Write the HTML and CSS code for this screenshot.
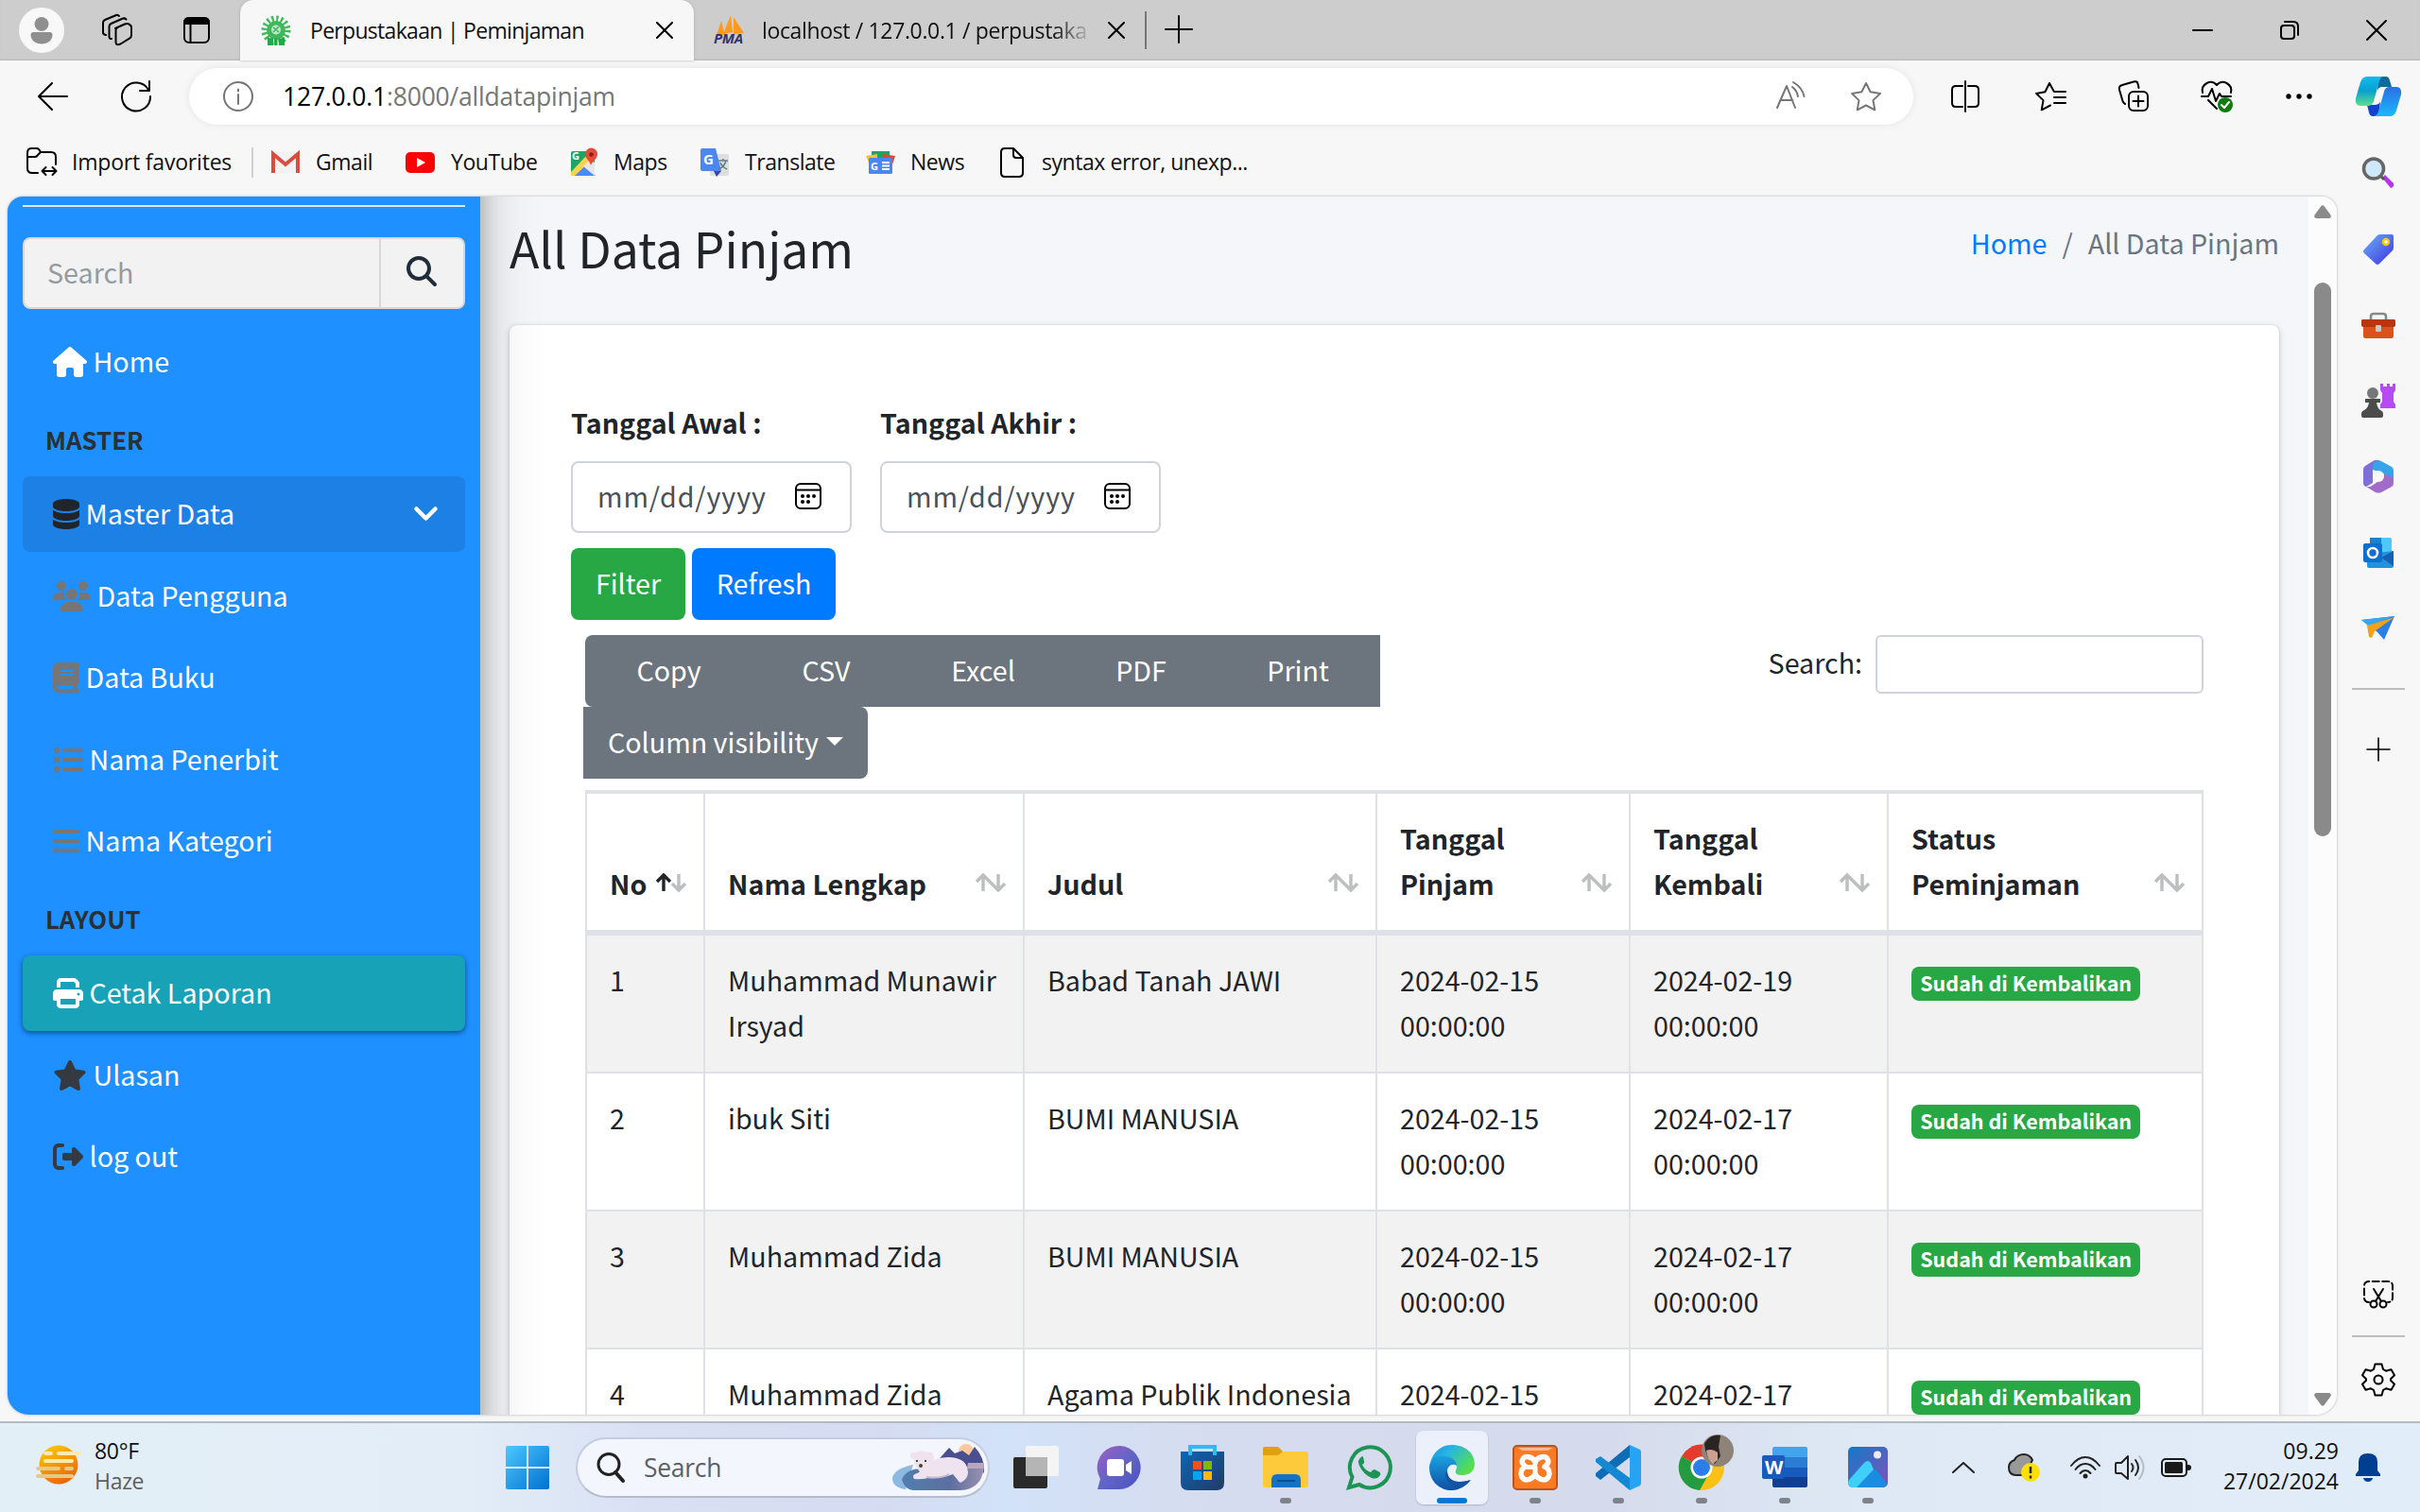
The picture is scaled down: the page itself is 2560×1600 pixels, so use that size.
FILE: index.html
```html
<!DOCTYPE html>
<html lang="id">
<head>
<meta charset="utf-8">
<title>Perpustakaan | Peminjaman</title>
<link rel="stylesheet" href="styles.css">
</head>
<body>
<header class="tabstrip">
  <div class="tab-tools">
    <svg width="48" height="48" viewBox="0 0 48 48"><circle cx="24" cy="24" r="24" fill="#f8f8f8"/><circle cx="24" cy="17.500" r="7.500" fill="#8f8f8f"/><path d="M12.500 29q0-3 3-3h17q3 0 3 3c0 5-4.500 9.500-11.500 9.500S12.500 34 12.500 29z" fill="#8f8f8f"/></svg>
    <svg width="34" height="34" viewBox="0 0 34 34" class="line"><path d="M15 15l10-4.500q3-1.200 5 .5 2 1 2 3v8q0 2.500-2 3.700l-9.500 5.800q-4.500 2-5-1.500V17q0-1.500 1.500-2.500M11 26q-2 .5-2.500-2V13q0-2 2-3L23 4.500q2-.5 3.500 1M5 22q-3-.5-3-2.500V9q0-2 2-3l12-5q2-.5 3 1"/></svg>
    <svg width="30" height="30" viewBox="0 0 30 30"><rect x="2" y="2" width="26" height="26" rx="5" fill="none" stroke="#000" stroke-width="2"/><path d="M1 9V7q0-6 6-6h16q6 0 6 6v2z"/><path d="M8.500 9v18" stroke="#000" stroke-width="2"/></svg>
  </div>
  <div class="tab tab-active">
    <svg width="32" height="34" viewBox="0 0 32 34"><circle cx="16" cy="17" r="12" fill="none" stroke="#3fb95c" stroke-width="7" stroke-dasharray="2.200 2.500"/><circle cx="16" cy="17" r="10" fill="#3fb95c"/><circle cx="16" cy="16.500" r="5" fill="#bfe8c8"/><path d="M13 19l6-6M13 14l6 5" stroke="#3fb95c" stroke-width="1.500"/><path d="M7 33V24l4 2 2-1v8zM14.500 33v-8h3v8zM19 33v-8l2 1 4-2v9z" fill="#23a845"/></svg>
    <span class="tab-title">Perpustakaan | Peminjaman</span>
    <svg width="18" height="18" viewBox="0 0 18 18" class="line"><path d="M1 1l16 16M17 1L1 17"/></svg>
  </div>
  <div class="tab">
    <svg width="34" height="34" viewBox="0 0 34 34"><path d="M8 7l-5 15h9zM18 1l-8 20 10-2zM21 3l11 17-11 1z" fill="#ff9a1f"/><text x="0" y="31" class="pma">PMA</text></svg>
    <span class="tab-title fade">localhost / 127.0.0.1 / perpustaka</span>
    <svg width="18" height="18" viewBox="0 0 18 18" class="line"><path d="M1 1l16 16M17 1L1 17"/></svg>
  </div>
  <span class="tab-sep"></span>
  <svg class="newtab line" width="28" height="28" viewBox="0 0 28 28"><path d="M14 0v28M0 14h28"/></svg>
  <div class="win-controls">
    <svg width="20" height="20" viewBox="0 0 20 20" class="line"><path d="M0 10h20"/></svg>
    <svg width="20" height="20" viewBox="0 0 20 20" class="line"><rect x="1" y="5" width="14" height="14" rx="3"/><path d="M5 1h9q5 0 5 5v9"/></svg>
    <svg width="20" height="20" viewBox="0 0 20 20" class="line"><path d="M0 0l20 20M20 0L0 20"/></svg>
  </div>
</header>

<nav class="toolbar">
  <svg width="32" height="30" viewBox="0 0 32 30" class="line"><path d="M15 1L1 15l14 14M1 15h30"/></svg>
  <svg width="32" height="32" viewBox="0 0 32 32" class="line"><path d="M29 9A15 15 0 1 0 31 16M30 0v10H20"/></svg>
  <div class="address">
    <svg width="32" height="32" viewBox="0 0 32 32" class="line gray"><circle cx="16" cy="16" r="15"/><path d="M16 14v10M16 8.500v2"/></svg>
    <span class="url"><b>127.0.0.1</b>:8000/alldatapinjam</span>
    <svg width="32" height="32" viewBox="0 0 32 32" class="line gray"><path d="M1 28L11 5l9 23M4.500 20h13M17 6q5 4 6 10M18 1q10 6 11.500 15"/></svg>
    <svg width="34" height="32" viewBox="0 0 34 32" class="line gray"><path d="M17 2l4.600 9.300 10.400 1.600-7.500 7.200 1.800 10.200L17 25.500 7.700 30.300l1.800-10.200L2 12.900l10.400-1.600z"/></svg>
  </div>
  <svg width="30" height="32" viewBox="0 0 30 32" class="line"><path d="M12 5H5Q1 5 1 9v14q0 4 4 4h7M18 5h7q4 0 4 4v14q0 4-4 4h-7M15 0v32"/></svg>
  <svg width="34" height="32" viewBox="0 0 34 32" class="line"><path d="M17 25.500L7.700 30.300l1.800-10.200L2 12.900l9.400-1.600L16 2l4.600 8.500M21 11h12M21 17h12M21 23h12"/></svg>
  <svg width="34" height="34" viewBox="0 0 34 34" class="line"><rect x="12" y="12" width="20" height="20" rx="5"/><path d="M22 16.500v11M16.500 22h11M8 25q-2-1-2.500-3L2 10q-1-4 3-5l12-3.500q4-1 4.500 2L22.500 8"/></svg>
  <svg width="34" height="34" viewBox="0 0 34 34" class="line"><path d="M2 13C0 4 11-2 17 5c6-7 17-1 15 8M1 17h7l4-8 4 13 4-8 2 3h10M8 21l9 9"/><circle cx="26" cy="26" r="8" fill="#107c10" stroke="none"/><path d="M22 26l3 3 5-6" stroke="#fff"/></svg>
  <svg width="28" height="6" viewBox="0 0 28 6"><circle cx="3" cy="3" r="2.700"/><circle cx="14" cy="3" r="2.700"/><circle cx="25" cy="3" r="2.700"/></svg>
  <svg width="48" height="42" viewBox="0 0 48 42"><defs><linearGradient id="cpa" x1="0" y1="0" x2="0" y2="1"><stop offset="0" stop-color="#12b9ec"/><stop offset=".5" stop-color="#0aa0cf"/><stop offset="1" stop-color="#5fe08a"/></linearGradient><linearGradient id="cpb" x1="0" y1="0" x2="0" y2="1"><stop offset="0" stop-color="#2a6fe0"/><stop offset="1" stop-color="#1bb9ff"/></linearGradient></defs><path d="M24 0h8q3 0 4 4l2 7H28q-4 0-5 4z" fill="#0d6c99"/><path d="M24 42h-6q-3 0-4-4l-2-8h8q4 0 6-3z" fill="#1440cf"/><path d="M12 0h18q-4 0-5 5l-6 21q-1.500 5-6 5H5q-6 0-5-8L5 6q2-6 7-6z" fill="url(#cpa)"/><path d="M36 42H19q4-1 5-5l6-21q1-5 6-5h7q6 0 5 8l-5 17q-2 6-7 6z" fill="url(#cpb)"/></svg>
</nav>

<div class="browser-body">
  <div class="browser-main">
    <div class="favorites">
      <svg width="32" height="32" viewBox="0 0 32 32" class="line"><path d="M12 27H6q-5 0-5-5V6q0-5 4-5h6q2 0 4 4h11q5 0 5 5v8M1 10h8q2 0 3-2l3-3M17 25h14M20.500 21l-4 4 4 4M27.500 21l4 4-4 4"/></svg>
      <span class="f-import">Import favorites</span>
      <i class="fav-sep"></i>
      <svg width="32" height="24" viewBox="0 0 32 24"><rect x="1" y="1" width="30" height="22" fill="#f2f2f2"/><path d="M3 23V3l13 11L29 3v20" fill="none" stroke="#dd4b3e" stroke-width="4"/></svg>
      <span>Gmail</span>
      <svg width="32" height="22" viewBox="0 0 32 22"><rect width="31" height="22" rx="5" fill="#f00"/><path d="M12 6l9 5-9 5z" fill="#fff"/></svg>
      <span>YouTube</span>
      <svg width="30" height="30" viewBox="0 0 30 30"><rect x="1" y="3" width="25" height="26" rx="2" fill="#1fa463"/><path d="M1 29L14 15l13 14z" fill="#4a8cf7"/><path d="M1 25L20 5l5 5L5 29H1z" fill="#ffd34e"/><path d="M14 19l12 10V15l-5-3z" fill="#e6e6e6"/><path d="M6 29l8-8 8 8z" fill="#4a8cf7"/><text x="2" y="12" class="tiny">G</text><path d="M22 18c-1-5-6-7-6-12a6 6 0 0 1 13 0c0 5-5 7-7 12z" fill="#e5493a"/><circle cx="22.500" cy="6.500" r="2.300" fill="#8b1d15"/></svg>
      <span>Maps</span>
      <svg width="31" height="30" viewBox="0 0 31 30"><rect x="10" y="6" width="20" height="23" rx="2" fill="#dedede"/><path d="M2 0h14l6 24H2q-2 0-2-2V2q0-2 2-2z" fill="#4a87f0"/><path d="M14 24h8l-5 6z" fill="#3446b0"/><text x="3" y="17" class="tr-g">G</text><path d="M19 13h10M24 11v2M27 13q-2 7-8 9M21 15q2 5 7 7" stroke="#607d8b" stroke-width="1.600" fill="none"/></svg>
      <span>Translate</span>
      <svg width="31" height="26" viewBox="0 0 31 26"><path d="M6 1h19v9H6z" fill="#1fa463"/><path d="M0 6l12-2v9H3z" fill="#fbc02d"/><path d="M17 4l14 2-3 9H17z" fill="#ea4335"/><rect x="3" y="8" width="25" height="17" rx="1.500" fill="#4a87f0"/><text x="5" y="21" class="tiny">G</text><path d="M17 13h8M17 16.500h8M17 20h8" stroke="#fff" stroke-width="1.800"/></svg>
      <span>News</span>
      <svg width="28" height="32" viewBox="0 0 28 32" class="line"><path d="M1 5q0-4 4-4h9l10 10v16q0 4-4 4H5q-4 0-4-4zM14 1v7q0 3 3 3h7"/></svg>
      <span class="f-syntax">syntax error, unexp...</span>
    </div>

    <div class="page">
      <aside class="sidebar">
        <div class="brand-line"></div>
        <div class="side-search"><span>Search</span><div><svg width="32" height="32" viewBox="0 0 512 512" fill="#1f2d3d"><path d="M416 208c0 45.900-14.900 88.300-40 122.700L502.600 457.400c12.500 12.500 12.500 32.800 0 45.300s-32.800 12.500-45.300 0L330.700 376c-34.400 25.200-76.800 40-122.700 40C93.100 416 0 322.900 0 208S93.100 0 208 0S416 93.100 416 208zM208 352a144 144 0 1 0 0-288 144 144 0 1 0 0 288z"/></svg></div></div>
        <a class="nav-link first"><svg width="36" height="32" viewBox="0 0 576 512" fill="#fff"><path d="M575.800 255.500c0 18-15 32.100-32 32.100h-32l.7 160.200c0 2.700-.2 5.400-.5 8.100V472c0 22.100-17.900 40-40 40H392c-22.100 0-40-17.900-40-40V384c0-17.700-14.300-32-32-32H256c-17.700 0-32 14.300-32 32v88c0 22.100-17.900 40-40 40H104c-22.100 0-40-17.900-40-40V287.600H32c-18 0-32-14-32-32.100c0-9 3-17 10-24L266.400 8c7-7 15-8 22-8s15 2 21 7L564.800 231.500c8 7 12 15 11 24z"/></svg><span>Home</span></a>
        <h6 class="nav-header">MASTER</h6>
        <a class="nav-link open"><svg width="28" height="32" viewBox="0 0 448 512" fill="#212529"><path d="M448 80v48c0 44.200-100.300 80-224 80S0 172.200 0 128V80C0 35.800 100.300 0 224 0S448 35.800 448 80zM393.200 214.700c20.800-7.400 39.900-16.900 54.800-28.600V288c0 44.200-100.300 80-224 80S0 332.200 0 288V186.100c14.900 11.800 34 21.200 54.800 28.600C99.700 230.700 159.500 240 224 240s124.300-9.300 169.200-25.300zM0 346.100c14.900 11.800 34 21.200 54.800 28.600C99.700 390.700 159.500 400 224 400s124.300-9.300 169.200-25.300c20.800-7.400 39.900-16.900 54.800-28.600V432c0 44.200-100.300 80-224 80S0 476.200 0 432V346.100z"/></svg><span>Master Data</span><svg class="caret" width="25" height="16" viewBox="0 0 25 16"><path d="M2.500 2.500l10 10 10-10" fill="none" stroke="#fff" stroke-width="4.500" stroke-linecap="round" stroke-linejoin="round"/></svg></a>
        <a class="nav-link"><svg width="40" height="32" viewBox="0 0 640 512" fill="#767676"><path d="M144 0a80 80 0 1 1 0 160A80 80 0 1 1 144 0zM512 0a80 80 0 1 1 0 160A80 80 0 1 1 512 0zM0 298.700C0 239.800 47.800 192 106.700 192h42.700c15.900 0 31 3.500 44.600 9.700c-1.300 7.200-1.900 14.700-1.900 22.300c0 38.200 16.800 72.500 43.300 96c-.2 0-.4 0-.7 0H21.300C9.600 320 0 310.400 0 298.700zM405.300 320c-.2 0-.4 0-.7 0c26.600-23.500 43.300-57.800 43.300-96c0-7.600-.7-15-1.900-22.300c13.600-6.300 28.700-9.700 44.600-9.700h42.700C592.200 192 640 239.800 640 298.700c0 11.800-9.600 21.300-21.300 21.300H405.300zM224 224a96 96 0 1 1 192 0 96 96 0 1 1 -192 0zM128 485.300C128 411.700 187.700 352 261.300 352H378.700C452.300 352 512 411.700 512 485.300c0 14.700-11.900 26.700-26.700 26.700H154.700c-14.700 0-26.700-11.900-26.700-26.700z"/></svg><span>Data Pengguna</span></a>
        <a class="nav-link"><svg width="28" height="32" viewBox="0 0 448 512" fill="#767676"><path d="M96 0C43 0 0 43 0 96V416c0 53 43 96 96 96H384h32c17.700 0 32-14.300 32-32s-14.300-32-32-32V384c17.700 0 32-14.300 32-32V32c0-17.700-14.300-32-32-32H384 96zm0 384H352v64H96c-17.700 0-32-14.300-32-32s14.300-32 32-32zm32-240c0-8.800 7.200-16 16-16H336c8.800 0 16 7.200 16 16s-7.200 16-16 16H144c-8.800 0-16-7.200-16-16zm16 48H336c8.800 0 16 7.200 16 16s-7.200 16-16 16H144c-8.800 0-16-7.200-16-16s7.200-16 16-16z"/></svg><span>Data Buku</span></a>
        <a class="nav-link"><svg width="32" height="32" viewBox="0 0 32 32" fill="#767676"><rect x="1" y="3" width="6" height="6" rx="1.500"/><rect x="1" y="13" width="6" height="6" rx="1.500"/><rect x="1" y="23" width="6" height="6" rx="1.500"/><rect x="10" y="4" width="22" height="4" rx="2"/><rect x="10" y="14" width="22" height="4" rx="2"/><rect x="10" y="24" width="22" height="4" rx="2"/></svg><span>Nama Penerbit</span></a>
        <a class="nav-link"><svg width="28" height="32" viewBox="0 0 28 32" fill="#767676"><rect y="4" width="28" height="4" rx="2"/><rect y="14" width="28" height="4" rx="2"/><rect y="24" width="28" height="4" rx="2"/></svg><span>Nama Kategori</span></a>
        <h6 class="nav-header">LAYOUT</h6>
        <a class="nav-link active"><svg width="32" height="32" viewBox="0 0 512 512" fill="#fff"><path fill-rule="evenodd" d="M128 0C92.700 0 64 28.700 64 64v96h64V64H354.700L384 93.300V160h64V93.300c0-17-6.700-33.300-18.700-45.300L400 18.700C388 6.700 371.700 0 354.700 0H128zM384 352v96H128V352H384zm64 32h32c17.700 0 32-14.300 32-32V256c0-35.300-28.700-64-64-64H64c-35.300 0-64 28.700-64 64v96c0 17.700 14.300 32 32 32H64v64c0 35.300 28.700 64 64 64H384c35.300 0 64-28.700 64-64V384zM432 248a24 24 0 1 1 0 48 24 24 0 1 1 0-48z"/></svg><span>Cetak Laporan</span></a>
        <a class="nav-link"><svg width="36" height="32" viewBox="0 0 576 512" fill="#343a40"><path d="M316.900 18C311.600 7 300.400 0 288.100 0s-23.400 7-28.800 18L195 150.300 51.400 171.500c-12 1.800-22 10.200-25.700 21.700s-.7 24.200 7.900 32.700L137.800 329 113.200 474.700c-2 12 3 24.200 12.900 31.300s23 8 33.800 2.300l128.300-68.500 128.300 68.500c10.800 5.700 23.900 4.900 33.800-2.300s14.900-19.300 12.900-31.300L438.500 329 542.700 225.900c8.600-8.500 11.700-21.200 7.900-32.700s-13.700-19.900-25.700-21.700L381.200 150.300 316.900 18z"/></svg><span>Ulasan</span></a>
        <a class="nav-link"><svg width="32" height="32" viewBox="0 0 512 512" fill="#343a40"><path d="M377.900 105.900L500.700 228.700c7.200 7.200 11.300 17.100 11.300 27.300s-4.100 20.100-11.300 27.300L377.900 406.100c-6.400 6.400-15 9.900-24 9.900c-18.700 0-33.900-15.200-33.900-33.900l0-62.100-128 0c-17.700 0-32-14.300-32-32l0-64c0-17.700 14.300-32 32-32l128 0 0-62.100c0-18.700 15.200-33.900 33.900-33.900c9 0 17.600 3.600 24 9.900zM160 96L96 96c-17.700 0-32 14.300-32 32l0 256c0 17.700 14.300 32 32 32l64 0c17.700 0 32 14.300 32 32s-14.300 32-32 32l-64 0c-53 0-96-43-96-96L0 128C0 75 43 32 96 32l64 0c17.700 0 32 14.300 32 32s-14.300 32-32 32z"/></svg><span>log out</span></a>
      </aside>

      <main class="content">
        <div class="content-header">
          <h1>All Data Pinjam</h1>
          <p class="crumbs"><a>Home</a><span>/</span>All Data Pinjam</p>
        </div>
        <section class="card">
          <div class="dates">
            <label>Tanggal Awal :<span class="date"><em>mm/dd/yyyy</em><svg width="30" height="30" viewBox="0 0 30 30" class="line"><rect x="2" y="2" width="26" height="26" rx="5"/><path d="M2 8.500h26"/><g fill="#000" stroke="none"><circle cx="9" cy="15" r="2"/><circle cx="15" cy="15" r="2"/><circle cx="21" cy="15" r="2"/><circle cx="9" cy="21" r="2"/><circle cx="15" cy="21" r="2"/></g></svg></span></label>
            <label>Tanggal Akhir :<span class="date"><em>mm/dd/yyyy</em><svg width="30" height="30" viewBox="0 0 30 30" class="line"><rect x="2" y="2" width="26" height="26" rx="5"/><path d="M2 8.500h26"/><g fill="#000" stroke="none"><circle cx="9" cy="15" r="2"/><circle cx="15" cy="15" r="2"/><circle cx="21" cy="15" r="2"/><circle cx="9" cy="21" r="2"/><circle cx="15" cy="21" r="2"/></g></svg></span></label>
          </div>
          <div class="actions"><button class="btn green">Filter</button><button class="btn blue">Refresh</button></div>
          <div class="table-tools">
            <div class="exports">
              <div class="btn-group"><button class="b1">Copy</button><button class="b2">CSV</button><button class="b3">Excel</button><button class="b4">PDF</button><button class="b5">Print</button></div>
              <button class="colvis">Column visibility<i></i></button>
            </div>
            <label class="filter">Search:<span></span></label>
          </div>
          <table>
            <colgroup><col class="c1"><col class="c2"><col class="c3"><col class="c4"><col class="c5"><col class="c6"></colgroup>
            <thead><tr>
              <th><div>No<svg class="sort" width="34" height="20" viewBox="0 0 34 20"><path d="M25 1v17M18 11l7 7 7-7"/><path class="on" d="M9 19V2M2 9l7-7 7 7"/></svg></div></th>
              <th><div>Nama Lengkap<svg class="sort" width="34" height="20" viewBox="0 0 34 20"><path d="M9 19V2M2 9l7-7 8 8M25 1v17M17 10l8 8 7-7"/></svg></div></th>
              <th><div>Judul<svg class="sort" width="34" height="20" viewBox="0 0 34 20"><path d="M9 19V2M2 9l7-7 8 8M25 1v17M17 10l8 8 7-7"/></svg></div></th>
              <th><div>Tanggal<br>Pinjam<svg class="sort" width="34" height="20" viewBox="0 0 34 20"><path d="M9 19V2M2 9l7-7 8 8M25 1v17M17 10l8 8 7-7"/></svg></div></th>
              <th><div>Tanggal<br>Kembali<svg class="sort" width="34" height="20" viewBox="0 0 34 20"><path d="M9 19V2M2 9l7-7 8 8M25 1v17M17 10l8 8 7-7"/></svg></div></th>
              <th><div>Status<br>Peminjaman<svg class="sort" width="34" height="20" viewBox="0 0 34 20"><path d="M9 19V2M2 9l7-7 8 8M25 1v17M17 10l8 8 7-7"/></svg></div></th>
            </tr></thead>
            <tbody>
              <tr><td>1</td><td>Muhammad Munawir<br>Irsyad</td><td>Babad Tanah JAWI</td><td>2024-02-15<br>00:00:00</td><td>2024-02-19<br>00:00:00</td><td><span class="badge">Sudah di Kembalikan</span></td></tr>
              <tr><td>2</td><td>ibuk Siti</td><td>BUMI MANUSIA</td><td>2024-02-15<br>00:00:00</td><td>2024-02-17<br>00:00:00</td><td><span class="badge">Sudah di Kembalikan</span></td></tr>
              <tr><td>3</td><td>Muhammad Zida</td><td>BUMI MANUSIA</td><td>2024-02-15<br>00:00:00</td><td>2024-02-17<br>00:00:00</td><td><span class="badge">Sudah di Kembalikan</span></td></tr>
              <tr><td>4</td><td>Muhammad Zida</td><td>Agama Publik Indonesia</td><td>2024-02-15</td><td>2024-02-17</td><td><span class="badge">Sudah di Kembalikan</span></td></tr>
            </tbody>
          </table>
        </section>
      </main>

      <div class="scrollbar">
        <svg width="18" height="14" viewBox="0 0 18 14"><path d="M7.500 1q1.500-1.500 3 0l7 9.500q1 3-1.500 3.500H2q-2.500-.5-1.500-3.500z" fill="#8a8a8a"/></svg>
        <div class="thumb"></div>
        <svg width="18" height="14" viewBox="0 0 18 14"><path d="M7.500 13q1.500 1.500 3 0l7-9.500Q18.500.5 16 0H2Q-.5.5.5 3.500z" fill="#8a8a8a"/></svg>
      </div>
    </div>
  </div>

  <aside class="rail">
    <svg width="36" height="34" viewBox="0 0 36 34"><path d="M22 22l3-3 9 9q1 4-3 5z" fill="#b534f0"/><path d="M20 20l4 4" stroke="#555" stroke-width="3"/><circle cx="13" cy="12.500" r="10.500" fill="#cfe9fb" stroke="#666" stroke-width="3.500"/></svg>
    <svg width="36" height="34" viewBox="0 0 36 34"><defs><linearGradient id="tg" x1="0" y1="0" x2="1" y2="1"><stop offset="0" stop-color="#6db4f8"/><stop offset="1" stop-color="#3b2fe0"/></linearGradient></defs><path d="M17 2q1-1 3-1h12q2 0 2 2v12q0 2-1 3L19 32q-2 2-4 0L3 21q-2-2 0-4z" fill="url(#tg)"/><circle cx="26" cy="9" r="3" fill="#fff" stroke="#f9c80e" stroke-width="2.500"/></svg>
    <svg width="36" height="28" viewBox="0 0 36 28"><path d="M10 8V4q0-3 3-3h10q3 0 3 3v4" fill="none" stroke="#888" stroke-width="2.600"/><rect x="2" y="12" width="32" height="15" rx="2.500" fill="#d9531a"/><path d="M1 7h34q1 0 1 2v4q0 2-2 2H2q-2 0-2-2V9q0-2 1-2z" fill="#b8360d"/><rect x="15" y="13" width="6" height="7" rx="1" fill="#c9c9c9"/></svg>
    <svg width="36" height="36" viewBox="0 0 36 36"><path d="M20 0h3v3h4V0h3v3h3V0h3v7l-2 3v9l2 3v4H20v-4l2-3v-9l-2-3z" fill="#b64bf5"/><circle cx="12" cy="10" r="6" fill="#777"/><path d="M4 16h16v4h-4q1 6 4 8 3 1 3 4v2q0 2-2 2H2q-2 0-2-2v-2q0-3 3-4 4-2 5-8H4z" fill="#4c4c4c"/></svg>
    <svg width="34" height="36" viewBox="0 0 34 36"><path d="M12 1.500L3 7Q1 8 1 11v14q0 3 3 4l7-4V11q0-3 3-4l5-5q-4-2-7-.5z" fill="#7d6fd8"/><path d="M14 2q3-1.500 6 0l11 6q2 1 2 4v9l-9-5-13-5V7q0-3 3-5z" fill="#35a4e8"/><path d="M33 20v5q0 3-2 4l-11 6q-3 1-6 0L4 29q3 1 6-1l12-8q1-1 1-5z" fill="#a06bc9"/><circle cx="17" cy="18" r="6" fill="#f7f7f7"/></svg>
    <svg width="34" height="32" viewBox="0 0 34 32"><rect x="8" y="0" width="23" height="18" rx="1.500" fill="#4fc7fa"/><path d="M8 0h12v14H8z" fill="#1a80d0"/><path d="M5 17l28-3v16q0 2-2 2H7q-2 0-2-2z" fill="#2192dd"/><path d="M33 14v16L20 21z" fill="#1561b0"/><rect x="1" y="6" width="20" height="20" rx="2" fill="#0a6fd0"/><circle cx="11" cy="16" r="5" fill="none" stroke="#fff" stroke-width="2.600"/></svg>
    <svg width="36" height="26" viewBox="0 0 36 26"><path d="M0 4L35 0 24 25l-7-8z" fill="#2b7fe4"/><path d="M0 4L35 0 7 10z" fill="#35a8ef"/><path d="M6 10L35 1 14 16l-3 7-3-1z" fill="#f0a21c"/></svg>
    <i></i>
    <svg width="24" height="24" viewBox="0 0 24 24" class="line"><path d="M12 0v24M0 12h24" stroke-width="1.600"/></svg>
    <div class="rail-bottom">
      <svg width="34" height="32" viewBox="0 0 34 32" class="line"><path d="M7 24Q2 24 2 19V7q0-5 5-5h20q5 0 5 5v12q0 5-5 5" stroke-dasharray="7 3.500"/><path d="M12 10l8 13M22 10l-8 13"/><circle cx="12" cy="26" r="3.500"/><circle cx="22" cy="26" r="3.500"/></svg>
      <i></i>
      <svg width="36" height="36" viewBox="0 0 36 36" class="line"><path d="M14.500 1.500h7l1.500 5.500 3 1.700 5.500-1.400 3.500 6-4 4v1.400l4 4-3.500 6-5.500-1.400-3 1.700-1.500 5.500h-7L13 29l-3-1.700-5.500 1.400-3.500-6 4-4v-1.400l-4-4 3.500-6L10 8.700 13 7z" stroke-linejoin="round"/><circle cx="18" cy="18" r="4.500"/></svg>
    </div>
  </aside>
</div>

<footer class="taskbar">
  <div class="weather">
    <svg width="50" height="42" viewBox="0 0 50 42"><defs><linearGradient id="sun" x1="0" y1="0" x2=".5" y2="1"><stop offset="0" stop-color="#ffd000"/><stop offset="1" stop-color="#ea6a0a"/></linearGradient></defs><circle cx="24" cy="21" r="20.500" fill="url(#sun)"/><g stroke-width="4" stroke-linecap="round"><path d="M10 9h6M24 9h22M10 17h28" stroke="#fbe9ad"/><path d="M2 25h22M32 25h6M2 33h36" stroke="#e3c98c"/></g></svg>
    <p>80°F<br><span>Haze</span></p>
  </div>
  <svg class="start" width="46" height="46" viewBox="0 0 46 46"><defs><linearGradient id="wn" x1="0" y1="0" x2="1" y2="1"><stop offset="0" stop-color="#4cc9ff"/><stop offset="1" stop-color="#006fd0"/></linearGradient></defs><path d="M2 0h20v22H0V2q0-2 2-2zM24 0h20q2 0 2 2v20H24zM0 24h22v22H2q-2 0-2-2zM24 24h22v20q0 2-2 2H24z" fill="url(#wn)"/></svg>
  <div class="task-search">
    <svg width="30" height="32" viewBox="0 0 30 32"><circle cx="13" cy="12.500" r="11" fill="none" stroke="#222" stroke-width="3"/><path d="M20 21l8 9" stroke="#222" stroke-width="4" stroke-linecap="round"/></svg>
    <span>Search</span>
    <svg width="100" height="50" viewBox="0 0 100 50"><defs><linearGradient id="ice" x1="0" y1="0" x2="1" y2="0"><stop offset="0" stop-color="#4f7fae"/><stop offset=".6" stop-color="#5c6f9f"/><stop offset="1" stop-color="#9a8fb0"/></linearGradient></defs><circle cx="80" cy="8" r="8" fill="#fcc9a0"/><path d="M46 22L62 4l6 6 8-3 7 5 6-9q11 12 10 27l-8 6H46z" fill="#4a4f8f"/><path d="M82 20l17 0q0 12-5 20H78z" fill="#b8a8b8"/><path d="M2 36Q4 26 24 22l-8 26Q2 46 2 36z" fill="#8db9e0"/><path d="M12 38q4-12 22-12h64q-2 22-24 23H24q-8 0-12-11z" fill="url(#ice)"/><path d="M21 12q1-5 5-3 8-3 14 0 4-2 5 2 2 4 0 6 8-3 16-3 20 0 21 16 0 6-6 10-3 2-5-2l-5-6q-12 5-26 4-8 2-15 1-3-4 3-6 4-1 2-3-6-6-5-12-4 0-4-4z" fill="#efe3f0"/><path d="M62 32q-8 5-24 3" fill="none" stroke="#cbb6d2" stroke-width="2"/><path d="M28 17v2M37 17v2" stroke="#443" stroke-width="2"/><circle cx="32" cy="23" r="2" fill="#443"/></svg>
  </div>
  <div class="apps">
    <div><svg width="48" height="46" viewBox="0 0 48 46"><rect x="0" y="12" width="36" height="33" rx="2" fill="#2a2a2a"/><rect x="13" y="0" width="35" height="32" rx="2" fill="#f4f4f4"/><path d="M13 12h23v20H13z" fill="#b5b5b5"/></svg></div>
    <div><svg width="48" height="48" viewBox="0 0 48 48"><defs><linearGradient id="ch" x1="0" y1="0" x2="1" y2="1"><stop offset="0" stop-color="#a15fc0"/><stop offset=".5" stop-color="#6264c7"/><stop offset="1" stop-color="#4a52bd"/></linearGradient></defs><path d="M1 47l3-11A23 23 0 1 1 24 47z" fill="url(#ch)"/><rect x="11" y="15" width="18" height="18" rx="3" fill="#fff"/><path d="M31 21l6-4v14l-6-4z" fill="#fff"/></svg></div>
    <div><svg width="48" height="48" viewBox="0 0 48 48"><defs><linearGradient id="st" x1="0" y1="0" x2="1" y2="1"><stop offset="0" stop-color="#0d66b5"/><stop offset="1" stop-color="#223a66"/></linearGradient></defs><path d="M11 13V2h26v11" fill="none" stroke="#2fb9f5" stroke-width="4"/><path d="M1 7h46v33q0 8-8 8H9q-8 0-8-8z" fill="url(#st)"/><path d="M11 7v4M37 7v4" stroke="#2fb9f5" stroke-width="4"/><path d="M14 17h9v9h-9z" fill="#f25022"/><path d="M25 17h9v9h-9z" fill="#7fba00"/><path d="M14 28h9v9h-9z" fill="#00a4ef"/><path d="M25 28h9v9h-9z" fill="#ffb900"/></svg></div>
    <div class="run"><svg width="48" height="44" viewBox="0 0 48 44"><path d="M2 0h14l5 5-3 6H0V2q0-2 2-2z" fill="#dea00c"/><path d="M16 9l5-4h25q2 0 2 2v34q0 2-2 2H2q-2 0-2-2V9z" fill="#fdca3c"/><path d="M9 43V35q0-6 6-6h19q6 0 6 6v8z" fill="#1273c4"/><path d="M15 36h19" stroke="#0b4d8c" stroke-width="2"/></svg></div>
    <div><svg width="48" height="48" viewBox="0 0 48 48"><path d="M3 45l3.500-11A21.500 21.500 0 1 1 14 42z" fill="none" stroke="#1d9454" stroke-width="4"/><path d="M17 12q-6 4-3 10 4 9 13 13 6 2 9-3 1-3-2-4l-4-2q-2 0-4 3-6-2-9-8 3-2 2-4l-1-4q0-1-1-1z" fill="#1d9454"/></svg></div>
    <div class="current"><svg width="48" height="48" viewBox="0 0 48 48"><defs><linearGradient id="e1" x1="0" y1="0" x2="1" y2=".6"><stop offset="0" stop-color="#1b8ee0"/><stop offset=".4" stop-color="#26b5e5"/><stop offset="1" stop-color="#57e04a"/></linearGradient><linearGradient id="e2" x1="0" y1="0" x2="0" y2="1"><stop offset="0" stop-color="#1ba0e0"/><stop offset="1" stop-color="#0c50a4"/></linearGradient></defs><path d="M1 19C4 7 13 0 24 0c14 0 24 9 24 20 0 8-6 12-13 12-6 0-8-2-7-5 3-5-1-12-9-13C11 13 4 15 1 19z" fill="url(#e1)"/><path d="M0 24c0-8 7-13 15-12 9 0 14 5 14 10-4-3-10 0-10 6 0 9 9 14 24 9-4 6-11 11-19 11C10 48 0 38 0 24z" fill="url(#e2)"/><path d="M17 30c0 8 6 14 14 16 5-1 9-4 13-9-14 5-25 1-25-9z" fill="#1353a0"/></svg></div>
    <div class="run"><svg width="48" height="48" viewBox="0 0 48 48"><rect x="1" y="1" width="46" height="46" rx="4" fill="#fb7a24" stroke="#b9541a" stroke-width="2"/><path d="M6 3h36l-4 3H10z" fill="#fdb98a"/><path d="M24 18c-3-6-11-7-13-3-2 3 0 6 3 8-5 2-6 7-4 11 3 5 11 3 14-3 3 6 11 8 14 3 2-4 1-9-4-11 3-2 5-5 3-8-2-4-10-3-13 3z" fill="none" stroke="#fff" stroke-width="5.500" stroke-linejoin="round"/><path d="M17 23.500h7M24 24v7M24 16v4" stroke="#fff" stroke-width="5" stroke-linecap="round"/></svg></div>
    <div class="run"><svg width="48" height="48" viewBox="0 0 48 48"><path d="M36 0l11 5q1 1 1 3v32q0 2-1 3l-11 5V0z" fill="#26a3f2"/><path d="M36 0v13L5 37l-5-4v-3z" fill="#0f6db5"/><path d="M36 48V35L5 12l-5 3v3z" fill="#1488d2"/></svg></div>
    <div class="run"><svg width="58" height="60" viewBox="0 0 58 60" class="chrome"><circle cx="24" cy="35" r="24" fill="#fbc116"/><path d="M24 35L3 23A24 24 0 0 1 45 23z" fill="#e33b2e"/><path d="M24 35L3 23a24 24 0 0 0 19 36l10-18z" fill="#249a41"/><circle cx="24" cy="35" r="11.500" fill="#fff"/><circle cx="24" cy="35" r="9" fill="#2b7de9"/><circle cx="41" cy="17" r="17" fill="#8d8378"/><path d="M27 10q6-11 17-9l-2 12 2 10-6 8q-10-6-11-21z" fill="#2a2422"/><path d="M29 17q6-3 12 2v8l-5 4q-6-5-7-14z" fill="#c9a091"/></svg></div>
    <div class="run"><svg width="48" height="44" viewBox="0 0 48 44"><path d="M13 0h33q2 0 2 2v9H11V2q0-2 2-2z" fill="#41a5ee"/><path d="M11 11h37v11H11z" fill="#2b7cd3"/><path d="M11 22h37v10H11z" fill="#185abd"/><path d="M11 32h37v9q0 2-2 2H13q-2 0-2-2z" fill="#103f91"/><rect x="0" y="9" width="24" height="25" rx="2" fill="#185abd"/><text x="3" y="29" class="word">W</text></svg></div>
    <div class="run"><svg width="42" height="44" viewBox="0 0 42 44"><defs><linearGradient id="ph" x1="0" y1="0" x2="1" y2="1"><stop offset="0" stop-color="#1379c8"/><stop offset="1" stop-color="#8052b8"/></linearGradient></defs><rect width="42" height="43" rx="5" fill="url(#ph)"/><path d="M5 43L26 25q3-2 5 1l10 13q-1 4-5 4z" fill="#1a8de0"/><path d="M1 35l16-18q4-4 7 0l3 7L9 43H5q-5 0-5-5z" fill="#3fd0fa"/><circle cx="31" cy="8.500" r="4" fill="#f0eaf6"/></svg></div>
  </div>
  <div class="tray">
    <svg width="24" height="14" viewBox="0 0 24 14" class="line dark"><path d="M1 12L12 2l11 10"/></svg>
    <svg width="34" height="32" viewBox="0 0 34 32"><path d="M9 24q-8 0-8-8 0-6 6-8 3-6 10-6 6 0 9 6l-8 16z" fill="#999" stroke="#222" stroke-width="2"/><circle cx="24" cy="21" r="10" fill="#fce100"/><path d="M24 15v7M24 24.500v3" stroke="#222" stroke-width="2.500"/></svg>
    <svg width="34" height="26" viewBox="0 0 34 26" class="line dark"><path d="M2 11Q9 2 17 2t15 9M6.500 15Q11 9 17 9t10.500 6M11.500 19q2.500-3 5.500-3t5.500 3"/><circle cx="17" cy="22" r="2.500" fill="#222" stroke="none"/></svg>
    <svg width="34" height="28" viewBox="0 0 34 28" class="line dark"><path d="M1 10q0-1 1-1h5l7-7v24l-7-6H2q-1 0-1-1zM18 10q3 4 0 8M22 6q6 8 0 16"/><path d="M26 2q9 12 0 24" stroke="#b5bec6"/></svg>
    <svg width="34" height="22" viewBox="0 0 34 22"><rect x="2" y="2" width="26" height="18" rx="4" fill="none" stroke="#1a1a1a" stroke-width="2"/><rect x="5" y="5" width="19" height="12" rx="1.500" fill="#1a1a1a"/><path d="M29 8h1q3 0 3 3t-3 3h-1z" fill="#1a1a1a"/></svg>
    <p>09.29<br>27/02/2024</p>
    <svg width="28" height="32" viewBox="0 0 28 32"><path d="M4 10q0-9 10-9t10 9v9l3 4v2H1v-2l3-4z" fill="#003e92"/><path d="M9 27h10q-1 4-5 4t-5-4z" fill="#003e92"/></svg>
  </div>
</footer>
</body>
</html>
```
FILE: styles.css
```css
* { box-sizing: border-box; }
body { margin: 0; width: 2560px; height: 1600px; overflow: hidden; display: flex; flex-direction: column; background: #f7f7f7; color: #111; font: 23px/32px "Open Sans", "Noto Sans", sans-serif; }
svg { display: block; flex: none; overflow: visible; }
p, h1, h6 { margin: 0; }
button { border: 0; margin: 0; padding: 0; color: #fff; font: inherit; }
.line { fill: none; stroke: #000; stroke-width: 2; stroke-linecap: round; stroke-linejoin: round; }
.line.gray { stroke: #767676; }
.line.dark { stroke: #222; }

/* tab strip */
.tabstrip { height: 64px; flex: none; display: flex; align-items: center; background: #cdcdcd; box-shadow: inset 0 -2px 2px -1px #b4b4b4; white-space: nowrap; }
.tab-tools { width: 254px; display: grid; grid-template-columns: 87px 86px 30px; padding-left: 20px; align-items: center; }
.tab { width: 480px; height: 64px; padding-left: 22px; display: grid; grid-template-columns: 52px 366px 20px; align-items: center; letter-spacing: -.7px; }
.tab + .tab { width: 477px; padding-left: 21px; grid-template-columns: 51px 366px 20px; letter-spacing: -.35px; }
.tab-active { background: #f7f7f7; border-radius: 14px 14px 0 0; box-shadow: 0 0 3px #aaa; }
.fade { width: 350px; -webkit-mask-image: linear-gradient(90deg, #000 88%, transparent); mask-image: linear-gradient(90deg, #000 88%, transparent); }
.tab-sep { width: 2px; height: 40px; background: #777; }
.newtab { margin-left: 20px; margin-top: -2px; }
.win-controls { margin-left: auto; display: flex; gap: 72px; padding-right: 36px; }
.pma { font: italic 700 15px "Noto Sans", sans-serif; fill: #33336a; }
.tiny { font: 700 11px "Noto Sans", sans-serif; fill: #fff; }
.tr-g { font: 700 15px "Noto Sans", sans-serif; fill: #fff; }

/* toolbar */
.toolbar { height: 76px; flex: none; display: grid; grid-template-columns: 88px 72px 1864px 88px 88px 88px 90px 74px 48px; padding: 0 0 0 40px; align-items: center; }
.address { width: 1824px; height: 60px; border-radius: 30px; background: #fff; box-shadow: 0 0 8px rgba(0,0,0,.08); display: grid; grid-template-columns: 63px 1580px 78px 34px; padding-left: 36px; align-items: center; }
.url { font-size: 26.500px; letter-spacing: -.2px; color: #767676; }
.url b { font-weight: 400; color: #000; }

.browser-body { display: flex; height: 1364px; flex: none; }
.browser-main { width: 2472px; display: flex; flex-direction: column; }
.favorites { height: 66px; flex: none; display: grid; grid-template-columns: 48px 190px 20px 48px 95px 48px 126px 46px 92px 47px 128px 47px 95px 44px 300px; padding: 0 0 3px 28px; align-items: center; white-space: nowrap; letter-spacing: -.45px; }
.favorites span { margin-top: -1px; }
.favorites .f-import { letter-spacing: -.2px; }
.fav-sep { width: 2px; height: 32px; background: #cfcfcf; }

/* page viewport */
.page { margin-left: 8px; width: 2464px; height: 1289px; margin-top: 2px; display: flex; overflow: hidden; border-radius: 16px 16px 22px 22px; background: #f4f6f9; box-shadow: 0 0 3px rgba(0,0,0,.3); font: 28.660px/48px "Noto Sans CJK SC", "Noto Sans", sans-serif; color: #212529; }
.sidebar { width: 500px; flex: none; height: 1500px; margin-top: -100px; padding: 109px 16px 0; background: #1e90ff; box-shadow: 0 0 56px rgba(0,0,0,.25), 0 0 20px rgba(0,0,0,.22); position: relative; z-index: 1; color: #fff; }
.brand-line { height: 2px; background: #dee8f2; }
.side-search { margin-top: 32px; height: 76px; border: 2px solid #d6d8da; border-radius: 8px; background: #f2f2f2; display: flex; align-items: center; color: #939ba2; }
.side-search span { width: 375px; padding: 0 0 2px 24px; }
.side-search div { flex: 1; height: 72px; border-left: 2px solid #d6d8da; display: flex; align-items: center; justify-content: center; padding: 0 2px 4px 0; }
.nav-link { height: 80px; margin-bottom: 6.400px; padding: 0 32px; border-radius: 8px; display: flex; align-items: center; gap: 6.500px; }
.nav-link span { margin-top: -2px; }
.nav-link.first { margin-top: 16px; }
.nav-link.open { background: #1c80e4; }
.nav-link.active { background: #17a2b8; box-shadow: 0 2px 6px rgba(0,0,0,.3), 0 2px 4px rgba(0,0,0,.2); }
.caret { margin-left: auto; margin-right: -3px; }
.nav-header { height: 75px; padding: 14px 24px 0; font-size: 25.800px; line-height: 43px; font-weight: 700; color: #2b3035; }

.content { width: 1934px; padding: 0 31px; }
.content-header { height: 136px; display: flex; justify-content: space-between; padding-top: 19px; }
.content-header h1 { font-size: 51.600px; line-height: 69px; font-weight: 400; }
.crumbs { padding-top: 6px; color: #6c757d; }
.crumbs a { color: #007bff; }
.crumbs span { margin: 0 16px; }
.card { width: 1872px; height: 1300px; background: #fff; border-radius: 8px; box-shadow: 0 0 2px rgba(0,0,0,.125), 0 2px 6px rgba(0,0,0,.2); padding: 79px 80px 0 65px; }
.dates { display: flex; gap: 30px; font-weight: 700; }
.dates label { width: 297px; }
.date { margin-top: 17px; height: 76px; border: 2px solid #ced4da; border-radius: 8px; display: flex; justify-content: space-between; align-items: center; padding: 0 29px 2px 26px; color: #495057; font-weight: 400; }
.date em { font-style: normal; letter-spacing: .9px; }
.actions { display: flex; gap: 7px; margin-top: 16px; }
.btn { height: 76px; padding-bottom: 2px; border-radius: 8px; }
.green { width: 121px; background: #28a745; }
.blue { width: 152px; background: #007bff; }
.table-tools { display: flex; justify-content: space-between; margin: 16px 0 0 13px; height: 164px; }
.exports button { background: #6c757d; height: 76px; padding-bottom: 2px; }
.btn-group { display: flex; margin-left: 2px; width: 841px; border-radius: 8px 0 0 8px; overflow: hidden; }
.exports .b1 { width: 177px; }
.exports .b2 { width: 156px; }
.exports .b3 { width: 176px; }
.exports .b4 { width: 158px; }
.exports .b5 { width: 174px; }
.exports .colvis { width: 301px; border-radius: 0 8px 8px 0; display: flex; align-items: center; justify-content: center; gap: 8px; }
.colvis i { border: 9px solid transparent; border-top-color: #fff; border-bottom: 0; margin-top: -2px; }
.filter { display: flex; gap: 14px; height: 62px; line-height: 58px; }
.filter span { width: 347px; height: 62px; border: 2px solid #ced4da; border-radius: 6px; }
table { width: 1712px; margin-left: 15px; table-layout: fixed; border-collapse: separate; border-spacing: 0; }
.c1 { width: 125px; }
.c2 { width: 338px; }
.c3 { width: 373px; }
.c4 { width: 268px; }
.c5 { width: 273px; }
.c6 { width: 335px; }
th, td { padding: 23px 24px 25px; text-align: left; vertical-align: top; border: 0 solid #dee2e6; border-left-width: 2px; white-space: nowrap; }
th:last-child, td:last-child { border-right-width: 2px; }
th { height: 154px; vertical-align: bottom; border-top-width: 4px; border-bottom-width: 6px; font-weight: 700; }
th div { position: relative; }
.sort { position: absolute; right: -7px; bottom: 15px; fill: none; stroke: #bcbebf; stroke-width: 3.400; }
.sort .on { stroke: #212529; }
td { height: 146px; border-bottom-width: 2px; }
tbody tr:nth-child(odd) td { background: #f2f2f2; }
.badge { display: inline-block; height: 36px; margin-top: 10px; padding: 0 9.200px; border-radius: 8px; background: #28a745; color: #fff; font-size: 21.500px; line-height: 34px; font-weight: 700; vertical-align: top; }

.scrollbar { width: 30px; background: #fcfcfc; display: flex; flex-direction: column; align-items: center; padding: 9px 0 9px; }
.thumb { width: 18px; height: 586px; border-radius: 9px; background: #8a8a8a; margin: 68px 0 auto; }

/* right rail */
.rail { width: 88px; padding: 26px 0 0; display: flex; flex-direction: column; align-items: center; }
.rail > svg { margin-bottom: 47px; }
.rail > svg:nth-child(2) { margin-bottom: 50px; }
.rail > svg:nth-child(3) { margin-bottom: 47px; }
.rail > svg:nth-child(4) { margin-bottom: 44px; }
.rail > svg:nth-child(6) { margin-bottom: 51px; }
.rail > svg:nth-child(7) { margin-bottom: 50px; }
.rail i { width: 56px; height: 2px; background: #bdbdbd; }
.rail > svg:nth-child(9) { margin-top: 51px; }
.rail-bottom { margin-top: auto; display: flex; flex-direction: column; align-items: center; gap: 27px; padding-bottom: 26px; }

/* taskbar */
.taskbar { height: 96px; flex: none; border-top: 2px solid #b2bbc3; display: flex; align-items: center; background: linear-gradient(90deg, #e3eff7 0, #e2edf7 500px, #d9e0f4 680px, #d5dcf1 940px, #d2e2f8 1060px, #d6dcef 1280px, #d5dbec 1700px, #dfe9f5 1980px, #e1edf9 100%); }
.weather { width: 535px; padding-left: 38px; display: flex; align-items: center; gap: 12px; color: #111; }
.weather svg { margin-top: -7px; }
.weather p, .tray p { margin-top: -4px; letter-spacing: -.3px; }
.weather span { color: #5b5f63; }
.start { margin-right: 28px; }
.task-search { width: 438px; height: 64px; border: 2px solid #c3cde2; border-bottom-color: #b4bccd; border-radius: 32px; background: #f3f6fd; display: grid; grid-template-columns: 50px 261px 100px; padding-left: 20px; align-items: center; font-size: 26.500px; letter-spacing: -.3px; color: #5c5f66; }
.apps { display: flex; margin-left: 5px; }
.apps div { width: 88px; height: 78px; display: flex; align-items: center; justify-content: center; position: relative; }
.apps .current { width: 76px; margin: 0 6px; background: rgba(240,245,254,.8); border-radius: 8px; box-shadow: 0 1px 2px #aab4c8; }
.apps svg { margin-top: -1px; }
.run::after, .current::after { content: ""; position: absolute; bottom: 1px; left: 38px; width: 12px; height: 6px; border-radius: 3px; background: #7d828b; }
.current::after { left: 22px; width: 32px; background: #0078d4; }
.apps .chrome { margin: -11px 0 0 10px; }
.word { font: 700 20px "Noto Sans", sans-serif; fill: #fff; }
.tray { margin-left: 45px; display: grid; grid-template-columns: 59px 65px 48px 48px 50px 139px 17px; align-items: center; }
.tray p { width: 139px; text-align: right; letter-spacing: 0; }
.tray p + svg { margin-left: 17px; margin-top: -1px; }
```
